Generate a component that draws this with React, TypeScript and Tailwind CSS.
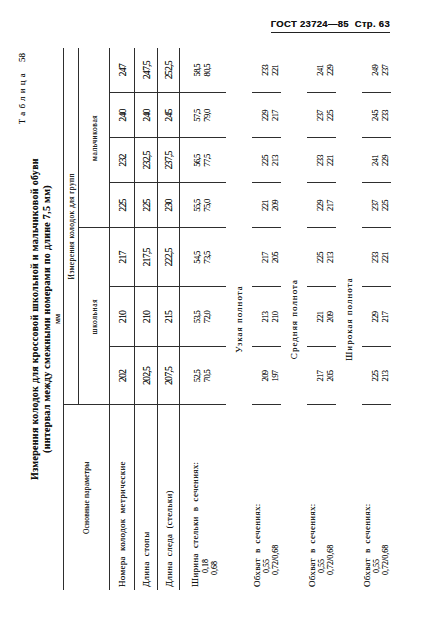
import React from "react";

type V = string;
const nomera: V[] = ["202", "210", "217", "225", "232", "240", "247"];
const stopa: V[] = ["202,5", "210", "217,5", "225", "232,5", "240", "247,5"];
const sled: V[] = ["207,5", "215", "222,5", "230", "237,5", "245", "252,5"];
const shir: [V, V][] = [
  ["52,5", "70,5"],
  ["53,5", "72,0"],
  ["54,5", "73,5"],
  ["55,5", "75,0"],
  ["56,5", "77,5"],
  ["57,5", "79,0"],
  ["58,5", "80,5"],
];
const uzk: [V, V][] = [
  ["209", "197"],
  ["213", "210"],
  ["217", "205"],
  ["221", "209"],
  ["225", "213"],
  ["229", "217"],
  ["233", "221"],
];
const sred: [V, V][] = [
  ["217", "205"],
  ["221", "209"],
  ["225", "213"],
  ["229", "217"],
  ["233", "221"],
  ["237", "225"],
  ["241", "229"],
];
const shirok: [V, V][] = [
  ["225", "213"],
  ["229", "217"],
  ["233", "221"],
  ["237", "225"],
  ["241", "229"],
  ["245", "233"],
  ["249", "237"],
];

const B = "border-[#2e2e2e]";

function SingleRow({ label, vals, h }: { label: string; vals: V[]; h: string }) {
  return (
    <tr className={h}>
      <td className={`border-r border-b ${B} pl-[3px] text-left align-middle text-[9px] leading-[10px] whitespace-pre tracking-[0.3px]`}>
        {label}
      </td>
      {vals.map((v, i) => (
        <td
          key={i}
          className={`${i < 6 ? "border-r" : ""} border-b ${B} text-center align-middle text-[10px] leading-[11px] tracking-[-0.9px]`}
        >
          {v}
        </td>
      ))}
    </tr>
  );
}

function PairRow({
  lines,
  vals,
  h,
  valPad,
  labPad,
}: {
  lines: string[];
  vals: [V, V][];
  h: string;
  valPad: string;
  labPad: string;
}) {
  return (
    <tr className={h}>
      <td className={`border-r ${B} pl-[3px] text-left align-top ${labPad}`}>
        <div className="whitespace-pre text-[9px] leading-[10.4px] tracking-[0.3px]">{lines[0]}</div>
        <div className="pl-[14px] text-[8px] leading-[9.2px]">{lines[1]}</div>
        <div className="pl-[12px] text-[8px] leading-[9.2px]">{lines[2]}</div>
      </td>
      {vals.map((v, i) => (
        <td key={i} className={`${i < 6 ? "border-r" : ""} ${B} text-center align-top ${valPad} text-[8.5px] leading-[9.8px] tracking-[-0.6px]`}>
          <div>{v[0]}</div>
          <div>{v[1]}</div>
        </td>
      ))}
    </tr>
  );
}

function Heading({ text, h }: { text: string; h: string }) {
  return (
    <tr className={h}>
      <td colSpan={8} className="text-center align-middle text-[9px] leading-[10px] tracking-[1px]">
        {text}
      </td>
    </tr>
  );
}

export default function App() {
  return (
    <div className="relative w-[427px] h-[623px] overflow-hidden bg-white text-[#111] [text-shadow:0_0_0.4px_rgba(0,0,0,0.55)]">
      <div className="flex justify-end pt-[18px] pr-[37px]">
        <div className="border-b-[1.5px] border-[#222] pb-[3px] font-['Liberation_Sans',Arial,sans-serif] font-bold text-[9.5px] leading-[11px] tracking-[0.3px] whitespace-pre">
          ГОСТ 23724—85  Стр. 63
        </div>
      </div>

      <div className="absolute left-0 top-0 w-[623px] h-[427px] origin-top-left translate-y-[623px] -rotate-90 font-['Liberation_Serif','Times_New_Roman',serif]">
        <div className="flex flex-col pt-[17px]">
          <div className="flex justify-end pr-[53px] text-[9px] leading-[10px]">
            <span className="tracking-[3.2px]">Таблица</span>
            <span className="ml-[8px]">58</span>
          </div>
          <div className="w-[542px] ml-[33px] mt-[2px] flex flex-col items-center">
            <div className="font-bold text-[10px] leading-[11.5px] tracking-[0.3px]">
              Измерения колодок для кроссовой школьной и мальчиковой обуви
            </div>
            <div className="font-bold text-[10px] leading-[11.5px] tracking-[0.3px]">
              (интервал между смежными номерами по длине 7,5 мм)
            </div>
            <div className="text-[8px] leading-[9.2px] mt-[1px]">мм</div>
          </div>

          <table className={`ml-[33px] mt-[1px] w-[542px] table-fixed border-collapse border-t ${B}`}>
            <colgroup>
              <col className="w-[185px]" />
              <col className="w-[58px]" />
              <col className="w-[60px]" />
              <col className="w-[59px]" />
              <col className="w-[45px]" />
              <col className="w-[45px]" />
              <col className="w-[45px]" />
              <col className="w-[45px]" />
            </colgroup>
            <tbody>
              <tr className="h-[15px]">
                <td rowSpan={2} className={`border-r border-b ${B} text-center align-middle text-[7.5px] leading-[9px] tracking-[0.2px]`}>
                  Основные параметры
                </td>
                <td colSpan={7} className={`border-b ${B} text-center align-middle text-[7.5px] leading-[9px] tracking-[0.4px]`}>
                  Измерения колодок для групп
                </td>
              </tr>
              <tr className="h-[31px]">
                <td colSpan={3} className={`border-r border-b ${B} text-center align-middle text-[7.5px] leading-[9px] tracking-[0.6px]`}>
                  школьная
                </td>
                <td colSpan={4} className={`border-b ${B} text-center align-middle text-[7.5px] leading-[9px] tracking-[0.6px]`}>
                  мальчиковая
                </td>
              </tr>
              <SingleRow label={"Номера  колодок  метрические"} vals={nomera} h="h-[25px]" />
              <SingleRow label={"Длина  стопы"} vals={stopa} h="h-[23px]" />
              <SingleRow label={"Длина  следа  (стельки)"} vals={sled} h="h-[22px]" />
              <PairRow
                lines={["Ширина  стельки  в  сечениях:", "0,18", "0,68"]}
                vals={shir}
                h="h-[46px]"
                valPad="pt-[13px]"
                labPad="pt-[10px]"
              />
              <Heading text="Узкая полнота" h="h-[26px]" />
              <PairRow lines={["Обхват  в  сечениях:", "0,55", "0,72/0,68"]} vals={uzk} h="h-[29px]" valPad="pt-[9px]" labPad="pt-[0px]" />
              <Heading text="Средняя полнота" h="h-[26px]" />
              <PairRow lines={["Обхват  в  сечениях:", "0,55", "0,72/0,68"]} vals={sred} h="h-[29px]" valPad="pt-[9px]" labPad="pt-[0px]" />
              <Heading text="Широкая полнота" h="h-[26px]" />
              <PairRow lines={["Обхват  в  сечениях:", "0,55", "0,72/0,68"]} vals={shirok} h="h-[29px]" valPad="pt-[9px]" labPad="pt-[0px]" />
            </tbody>
          </table>
        </div>
      </div>
    </div>
  );
}
